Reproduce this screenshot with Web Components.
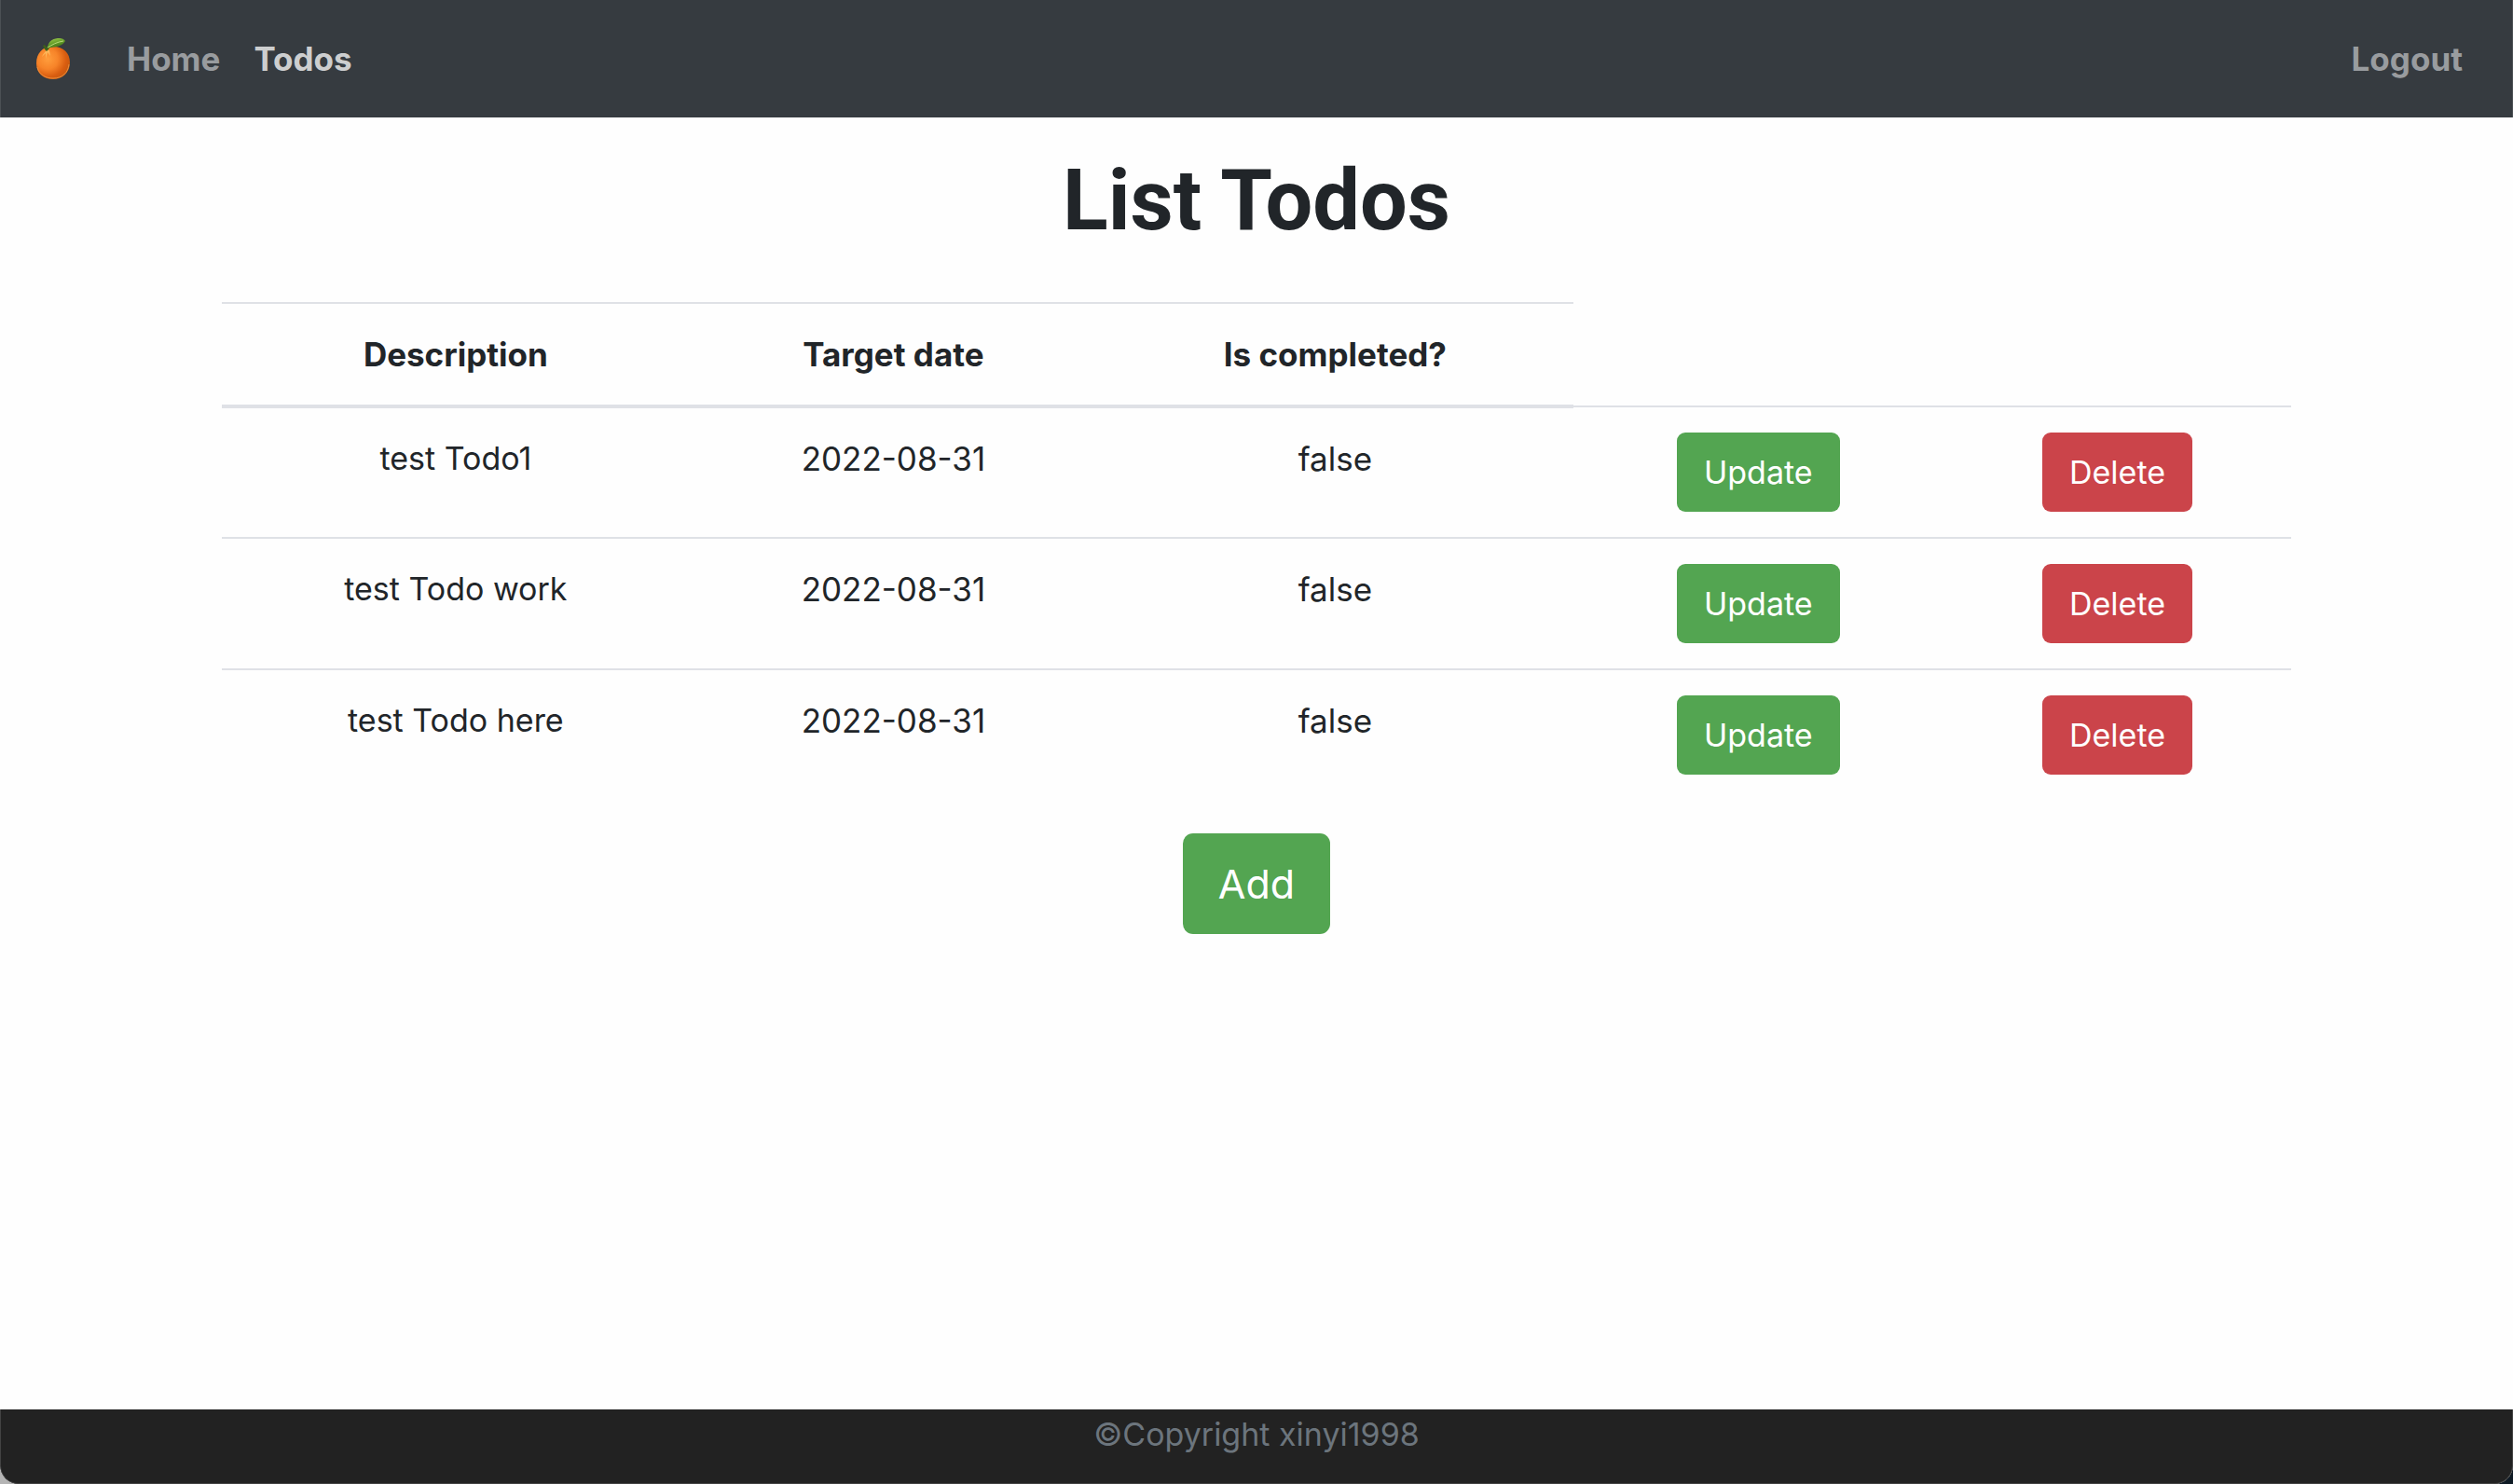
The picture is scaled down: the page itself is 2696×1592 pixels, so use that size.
<!DOCTYPE html>
<html lang="en">
<head>
<meta charset="utf-8">
<title>List Todos</title>
<style>
  html { background: linear-gradient(90deg, #b4b4b4 50%, #0e1a24 50%); }
  body { margin: 0; font: 400 35px/54px Inter, "Noto Sans", sans-serif; color: #212529; }
</style>
</head>
<body>
<todo-app></todo-app>

<template id="app-tpl">
  <style>
    :host { display: flex; flex-direction: column; min-height: 100vh; background: #fefefe; border-radius: 0 0 20px 20px; overflow: hidden; }
    main { flex: 1; box-sizing: border-box; width: 100%; max-width: 2280px; margin: 0 auto; padding: 36px 30px; text-align: center; }
    h1 { margin: 0 0 54px; font: 700 90px/108px Roboto, Inter, sans-serif; }
    todo-table { margin-bottom: 36px; }
  </style>
  <nav-bar></nav-bar>
  <main>
    <h1>List Todos</h1>
    <todo-table></todo-table>
    <action-button size="large">Add</action-button>
  </main>
  <page-footer>©Copyright xinyi1998</page-footer>
</template>

<template id="nav-tpl">
  <style>
    :host { display: block; background: #363b40; box-shadow: inset 1px 0 #4b5054, inset -1px 0 #4b5054; }
    nav { display: flex; align-items: center; padding: 18px 36px; }
    .brand { display: flex; width: 42px; margin-right: 40px; }
    svg { display: block; width: 42px; height: 54px; }
    a.link { padding: 18px; font-weight: 700; color: #999c9f; text-decoration: none; }
    a.active { color: #cdcecf; }
    .end { margin-left: auto; }
  </style>
  <nav aria-label="Main">
    <a class="brand" href="#" aria-label="Start">
      <svg viewBox="0 0 42 54" aria-hidden="true">
        <defs>
          <radialGradient id="peel" cx="34%" cy="38%" r="68%">
            <stop offset="0" stop-color="#ff9d3c"/><stop offset=".45" stop-color="#f78429"/>
            <stop offset=".8" stop-color="#d95d10"/><stop offset="1" stop-color="#c9590f"/>
          </radialGradient>
          <linearGradient id="leaf" x1="0" y1="0" x2=".5" y2="1">
            <stop offset="0" stop-color="#a8cf57"/><stop offset=".5" stop-color="#6da52d"/><stop offset="1" stop-color="#3d7418"/>
          </linearGradient>
        </defs>
        <path d="M3 32C3 21 10 14 19 14C31 13 39 20 39 31C39 42 31 49 21 49C10 49 3 42 3 32Z" fill="url(#peel)"/>
        <path d="M4 36C6 45 14 48 21 48C31 48 37 42 38 33" fill="none" stroke="#f4a14c" stroke-width="1" opacity=".7"/>
        <path d="M14 18C12 20 10 22 9 25L13 21L13 27L15 20L18 24L17 18Z" fill="#ffc062" opacity=".85"/>
        <path d="M10 13L12 12L14 15L16 12L18 14L16 17L14 19L12 17Z" fill="#3e6218"/>
        <path d="M15 15C16 7 22 5 28 5C30 5 33 6 34 8C31 13 25 15 15 15Z" fill="url(#leaf)"/>
        <path d="M15 15C20 12 25 9 32 8" fill="none" stroke="#b9da78" stroke-width="1"/>
      </svg>
    </a>
    <a class="link" href="#home">Home</a>
    <a class="link active" href="#todos" aria-current="page">Todos</a>
    <a class="link end" href="#logout">Logout</a>
  </nav>
</template>

<template id="button-tpl">
  <style>
    :host { display: inline-block; vertical-align: top; }
    button { display: block; box-sizing: border-box; margin: 0; border: 0; padding: 16px 29px 15px; border-radius: 9px; background: #53a551; color: #fff; font: inherit; font-size: 34px; line-height: 54px; cursor: pointer; }
    :host([variant="danger"]) button { background: #cb444a; }
    :host([size="large"]) button { padding: 20px 38px; border-radius: 11px; font-size: 43px; line-height: 68px; }
  </style>
  <button type="button"><slot></slot></button>
</template>

<template id="table-tpl">
  <style>
    :host { display: block; }
    table { width: 100%; table-layout: fixed; border-collapse: collapse; text-align: center; }
    .description { width: 22.6%; } .date { width: 19.7%; } .completed { width: 23%; } .update { width: 17.9%; }
    th, td { padding: 27px; border-top: 2px solid #dfe1e6; vertical-align: top; white-space: nowrap; }
    th { border-bottom: 4px solid #dfe1e6; font-weight: 700; }
    td:first-child { font-size: 34px; }
  </style>
  <table>
    <colgroup><col class="description"><col class="date"><col class="completed"><col class="update"><col></colgroup>
    <thead><tr><th scope="col">Description</th><th scope="col">Target date</th><th scope="col">Is completed?</th></tr></thead>
    <tbody></tbody>
  </table>
</template>

<template id="footer-tpl">
  <style>
    :host { display: block; background: #222; box-shadow: inset 1px 0 #434343, inset -1px 0 #434343, inset 0 -1px #434343; border-radius: 0 0 20px 20px; }
    footer { min-height: 80px; text-align: center; font-size: 34px; color: #6c757d; }
  </style>
  <footer><slot></slot></footer>
</template>

<script>
  class TemplateElement extends HTMLElement {
    constructor() {
      super();
      const template = document.getElementById(this.constructor.template);
      this.attachShadow({ mode: "open" }).append(template.content.cloneNode(true));
    }
  }

  class ActionButton extends TemplateElement { static template = "button-tpl"; }
  class NavBar extends TemplateElement { static template = "nav-tpl"; }
  class PageFooter extends TemplateElement { static template = "footer-tpl"; }
  class TodoApp extends TemplateElement { static template = "app-tpl"; }

  class TodoTable extends TemplateElement {
    static template = "table-tpl";
    todos = [
      { description: "test Todo1", targetDate: "2022-08-31", completed: false },
      { description: "test Todo work", targetDate: "2022-08-31", completed: false },
      { description: "test Todo here", targetDate: "2022-08-31", completed: false }
    ];
    connectedCallback() {
      const body = this.shadowRoot.querySelector("tbody");
      body.replaceChildren();
      for (const todo of this.todos) {
        const row = body.insertRow();
        for (const value of [todo.description, todo.targetDate, String(todo.completed)]) {
          row.insertCell().textContent = value;
        }
        row.insertCell().append(this.action("Update", "success"));
        row.insertCell().append(this.action("Delete", "danger"));
      }
    }
    action(label, variant) {
      const button = document.createElement("action-button");
      button.setAttribute("variant", variant);
      button.textContent = label;
      return button;
    }
  }

  customElements.define("action-button", ActionButton);
  customElements.define("nav-bar", NavBar);
  customElements.define("page-footer", PageFooter);
  customElements.define("todo-table", TodoTable);
  customElements.define("todo-app", TodoApp);
</script>
</body>
</html>
